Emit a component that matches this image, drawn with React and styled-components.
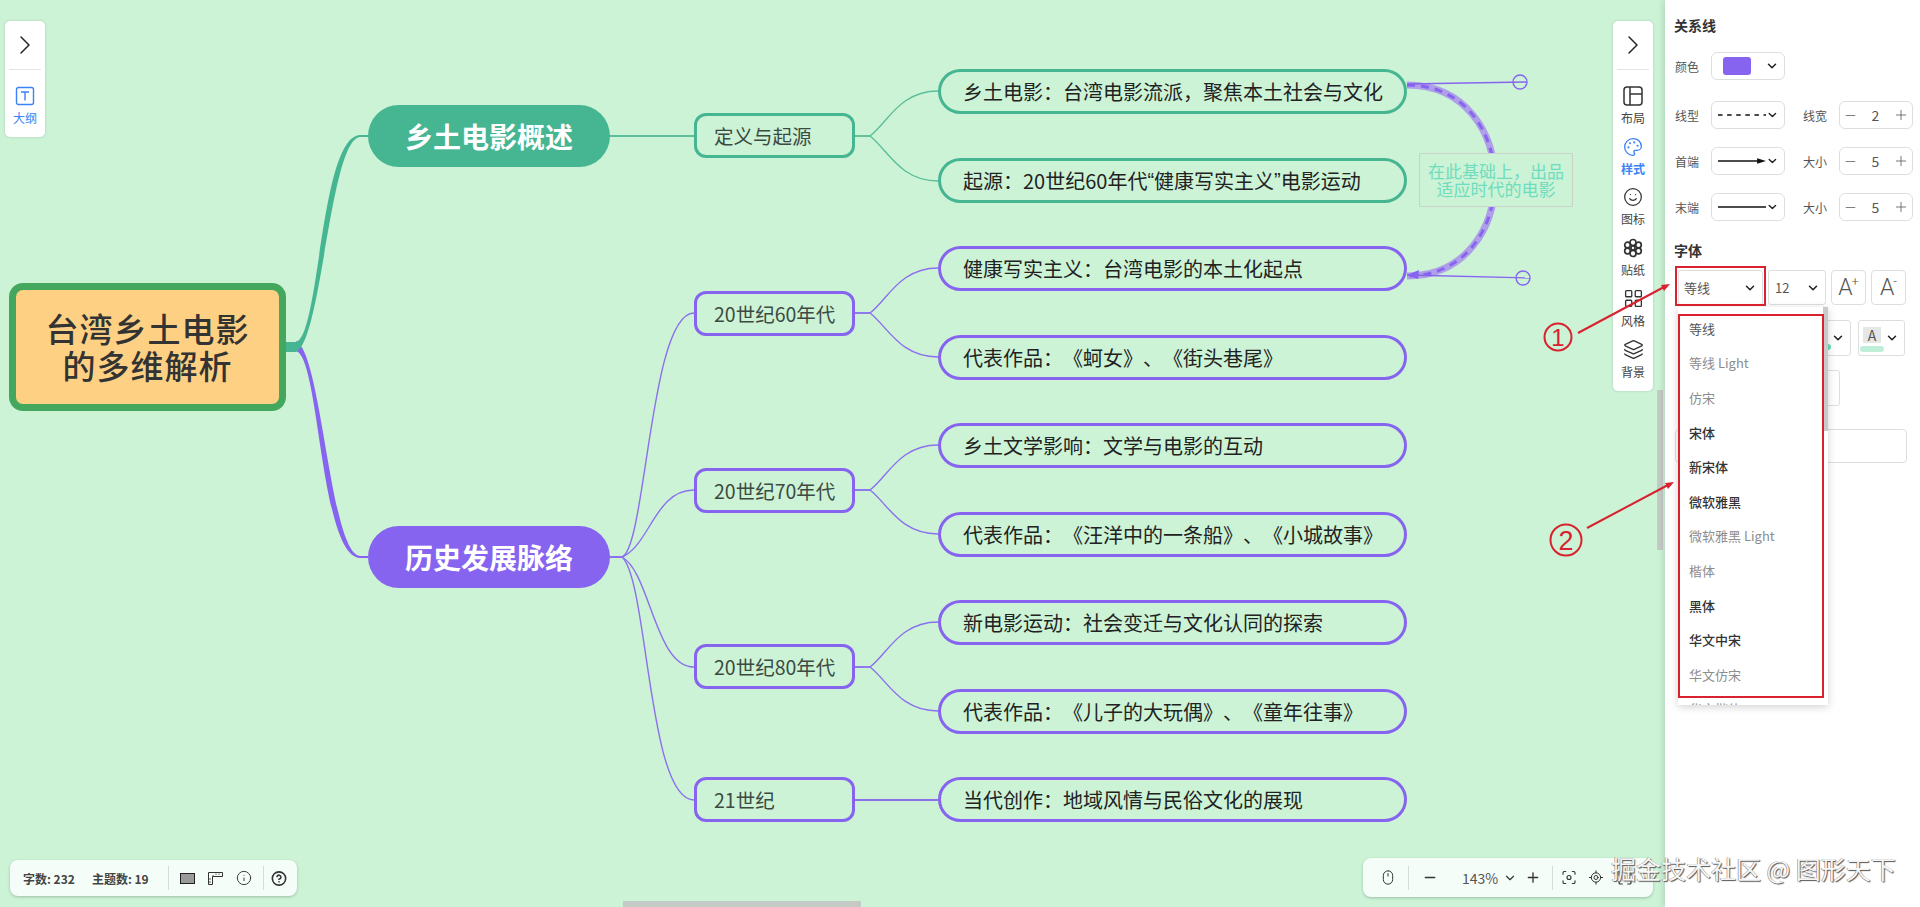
import React from 'react';
import styled, { createGlobalStyle } from 'styled-components';
import { ChevronRight, ChevronDown, Palette, Smile, LayoutGrid, Layers, Info, CircleHelp, Minus, Plus, Mouse, LocateFixed, Focus, Maximize } from 'lucide-react';

const TEAL = '#46B592';
const PURPLE = '#8764F0';
const BLUE = '#3B82F6';
const CJK = '"Noto Sans CJK SC", "Noto Sans", sans-serif';

const GlobalStyle = createGlobalStyle`
    html, body {
        margin: 0;
        padding: 0;
        overflow: hidden;
    }
    body {
        font-family: ${CJK};
        color: #333;
        text-spacing-trim: space-all;
    }
`;

const Page = styled.div`
    position: relative;
    display: flex;
    width: 1920px;
    height: 907px;
    overflow: hidden;
    background: #fff;
`;

const Canvas = styled.main`
    position: relative;
    flex: 1;
    background: #CCF3D6;
`;

const EdgeLayer = styled.svg`
    position: absolute;
    inset: 0;
    width: 100%;
    height: 100%;
`;

const placed = (p) => ({ style: { left: p.$x, top: p.$y, width: p.$w, height: p.$h } });

const RootNode = styled.div.attrs(placed)`
    position: absolute;
    box-sizing: border-box;
    display: flex;
    align-items: center;
    justify-content: center;
    text-align: center;
    background: #FDD083;
    border: 7px solid #43A85E;
    border-radius: 14px;
    font-size: 33px;
    line-height: 37px;
    letter-spacing: 1px;
    font-weight: 500;
    color: #333;
`;

const MainNode = styled.div.attrs(placed)`
    position: absolute;
    display: flex;
    align-items: center;
    justify-content: center;
    background: ${(p) => p.$accent};
    border-radius: 31px;
    font-size: 28px;
    font-weight: 700;
    color: #fff;
`;

const SubNode = styled.div.attrs(placed)`
    position: absolute;
    box-sizing: border-box;
    display: flex;
    align-items: center;
    padding-left: 17px;
    border: 3px solid ${(p) => p.$accent};
    border-radius: 12px;
    font-size: 19.5px;
    color: #3c4a42;
`;

const LeafNode = styled.div.attrs(placed)`
    position: absolute;
    box-sizing: border-box;
    display: flex;
    align-items: center;
    padding-left: 22px;
    border: 3px solid ${(p) => p.$accent};
    border-radius: 23px;
    font-size: 20px;
    color: #222;
    white-space: pre;
`;

const NarrowQuote = styled.span`
    font-family: "Liberation Sans", sans-serif;
`;

const RelationLabel = styled.div`
    position: absolute;
    left: 1419px;
    top: 153px;
    box-sizing: border-box;
    width: 154px;
    height: 54px;
    display: flex;
    align-items: center;
    justify-content: center;
    text-align: center;
    background: #CCF3D6;
    border: 1.5px solid #C9D3C8;
    font-size: 17px;
    line-height: 18px;
    color: #6FDCBE;
`;

const SideBar = styled.div`
    position: absolute;
    top: 21px;
    ${(p) => (p.$right ? 'right: 12px;' : 'left: 5px;')}
    box-sizing: border-box;
    width: 40px;
    height: ${(p) => p.$h}px;
    display: flex;
    flex-direction: column;
    align-items: center;
    background: #fff;
    border-radius: 5px;
    box-shadow: 0 0 3px rgba(0, 0, 0, 0.16);
`;

const Collapse = styled.div`
    width: 32px;
    height: 48px;
    flex: none;
    margin-bottom: 16px;
    display: flex;
    align-items: center;
    justify-content: center;
    border-bottom: 1px solid #e4e4e4;
    color: #222;
`;

const SideItem = styled.div`
    width: 100%;
    height: 50.6px;
    flex: none;
    display: flex;
    flex-direction: column;
    align-items: center;
    gap: 5px;
    color: ${(p) => (p.$active ? BLUE : '#444')};
    font-size: 12px;
    line-height: 14px;
    font-weight: ${(p) => (p.$bold ? 700 : 400)};
    svg { flex: none; }
`;

const BottomBar = styled.div`
    position: absolute;
    display: flex;
    align-items: center;
    box-sizing: border-box;
    height: ${(p) => p.$h}px;
    width: ${(p) => p.$w}px;
    bottom: ${(p) => p.$b}px;
    ${(p) => (p.$right ? 'left: 1363px;' : 'left: 10px;')}
    background: #F5FDF9;
    border-radius: 8px;
    box-shadow: 0 1px 3px rgba(0, 0, 0, 0.22);
    font-size: 12px;
    color: #444;
`;

const Stat = styled.span`
    font-weight: 700;
    margin-left: ${(p) => p.$ml}px;
    white-space: nowrap;
`;

const BarSep = styled.span`
    width: 1px;
    height: 24px;
    background: #d6dcd8;
    flex: none;
    margin-left: ${(p) => p.$ml}px;
`;

const BarIcon = styled.span`
    display: flex;
    width: 16px;
    justify-content: center;
    flex: none;
    margin-left: ${(p) => p.$ml}px;
    color: #333;
`;

const Zoom = styled.span`
    margin-left: ${(p) => p.$ml}px;
    width: 36px;
    font-size: 14px;
    color: #555;
    flex: none;
`;

const ScrollThumb = styled.div`
    position: absolute;
    background: #C4CAC5;
    ${(p) => p.$kind === 'h'
        ? 'left: 623px; bottom: 0; width: 238px; height: 6px;'
        : 'right: 2px; top: 390px; width: 6px; height: 160px;'}
`;

const Panel = styled.aside`
    position: relative;
    flex: none;
    box-sizing: border-box;
    width: 255px;
    padding: 18px 0 0 10px;
    background: #fff;
    box-shadow: -3px 0 5px rgba(0, 0, 0, 0.09);
    font-size: 12px;
    color: #555;
`;

const Title = styled.h3`
    margin: ${(p) => p.$mt || 0}px 0 ${(p) => p.$mb || 0}px -1px;
    font-size: 14px;
    line-height: 14px;
    font-weight: 700;
    color: #333;
`;

const FormRow = styled.div`
    display: flex;
    align-items: center;
    height: 28px;
    margin-top: ${(p) => p.$mt}px;
`;

const Label = styled.span`
    flex: none;
    width: ${(p) => p.$w || 36}px;
    margin-left: ${(p) => p.$ml || 0}px;
    white-space: nowrap;
`;

const Select = styled.div`
    flex: none;
    box-sizing: border-box;
    display: flex;
    align-items: center;
    justify-content: space-between;
    width: ${(p) => p.$w}px;
    height: ${(p) => p.$h || 28}px;
    margin-left: ${(p) => p.$ml || 0}px;
    padding: 0 5px 0 ${(p) => p.$pl ?? 6}px;
    border: 1px solid #dcdfe0;
    border-radius: ${(p) => p.$r || 6}px;
    background: #fff;
    font-size: 13px;
    color: #555;
`;

const Swatch = styled.span`
    width: 28px;
    height: 18px;
    margin-left: 6px;
    border-radius: 3px;
    background: ${PURPLE};
`;

const Stepper = styled.div`
    flex: none;
    box-sizing: border-box;
    display: flex;
    align-items: center;
    justify-content: space-between;
    width: 74px;
    height: 28px;
    padding: 0 3px;
    border: 1px solid #dcdfe0;
    border-radius: 6px;
    font-size: 14px;
    color: #555;
`;

const FontRow = styled.div`
    display: flex;
    gap: ${(p) => p.$gap || 5}px;
    margin: ${(p) => p.$mt}px 0 0 3px;
    height: ${(p) => p.$h}px;
`;

const SizeButton = styled.div`
    flex: none;
    box-sizing: border-box;
    width: 35px;
    display: flex;
    align-items: center;
    justify-content: center;
    border: 1px solid #dcdfe0;
    border-radius: 4px;
    font-family: "Roboto", sans-serif;
    font-size: 23px;
    font-weight: 300;
    color: #555;
    sup {
        font-size: 13px;
        line-height: 1;
        margin: -12px 0 0 -1px;
    }
`;

const ColorA = styled.span`
    position: relative;
    display: block;
    width: 18px;
    height: 16px;
    line-height: 16px;
    margin: 0 0 6px 4px;
    background: #E4E7E6;
    text-align: center;
    font-size: 14px;
    &::after {
        content: '';
        position: absolute;
        left: -3px;
        right: -3px;
        bottom: -9px;
        height: 6px;
        border-radius: 3px;
        background: #BFEFD9;
    }
`;

const Dot = styled.span`
    width: 6px;
    height: 6px;
    margin: 18px 0 0 auto;
    border-radius: 50%;
    background: #6FDCBE;
`;

const WideField = styled.div`
    box-sizing: border-box;
    width: 232px;
    height: 34px;
    margin-top: 23px;
    border: 1px solid #dcdfe0;
    border-radius: 4px;
`;

const Dropdown = styled.div`
    position: absolute;
    left: 13px;
    top: 307px;
    box-sizing: border-box;
    width: 150px;
    height: 398px;
    padding-top: 4px;
    overflow: hidden;
    background: #fff;
    box-shadow: 0 2px 8px rgba(0, 0, 0, 0.18);
`;

const DropThumb = styled.div`
    position: absolute;
    right: 0;
    top: 0;
    width: 5px;
    height: 124px;
    background: #C9C9C9;
`;

const FontItem = styled.div`
    height: 34.6px;
    display: flex;
    align-items: center;
    padding-left: 11px;
    font-size: 13px;
    white-space: nowrap;
    color: ${(p) => (p.$tone === 'thin' ? '#8d8d8d' : p.$tone === 'bold' ? '#333' : '#555')};
    font-weight: ${(p) => (p.$tone === 'bold' ? 500 : 400)};
`;

const AnnotationLayer = styled.svg`
    position: absolute;
    inset: 0;
    width: 1920px;
    height: 907px;
    pointer-events: none;
`;

const Watermark = styled.div`
    position: absolute;
    left: 1611px;
    top: 853px;
    font-size: 25px;
    line-height: 30px;
    white-space: nowrap;
    color: #f6f6f6;
    text-shadow: 1px 1px 1px #555, -0.5px -0.5px 0.5px #777;
`;

const subs = [
    { text: '定义与起源', y: 113, accent: TEAL },
    { text: '20世纪60年代', y: 291, accent: PURPLE },
    { text: '20世纪70年代', y: 468, accent: PURPLE },
    { text: '20世纪80年代', y: 644, accent: PURPLE },
    { text: '21世纪', y: 777, accent: PURPLE },
];

const leaves = [
    { text: '乡土电影：台湾电影流派，聚焦本土社会与文化', y: 69, accent: TEAL },
    { text: <>起源：20世纪60年代<NarrowQuote>“</NarrowQuote>健康写实主义<NarrowQuote>”</NarrowQuote>电影运动</>, y: 158, accent: TEAL },
    { text: '健康写实主义：台湾电影的本土化起点', y: 246, accent: PURPLE },
    { text: '代表作品：《蚵女》、《街头巷尾》', y: 335, accent: PURPLE },
    { text: '乡土文学影响：文学与电影的互动', y: 423, accent: PURPLE },
    { text: '代表作品：《汪洋中的一条船》、《小城故事》', y: 512, accent: PURPLE },
    { text: '新电影运动：社会变迁与文化认同的探索', y: 600, accent: PURPLE },
    { text: '代表作品：《儿子的大玩偶》、《童年往事》', y: 689, accent: PURPLE },
    { text: '当代创作：地域风情与民俗文化的展现', y: 777, accent: PURPLE },
];

// sub node centre -> leaf centres
const forks = [
    { y: 136, to: [91, 181], color: '#5CBF9A' },
    { y: 313, to: [268, 357], color: '#8C70EE' },
    { y: 490, to: [445, 534], color: '#8C70EE' },
    { y: 667, to: [622, 711], color: '#8C70EE' },
];

const fonts = [
    ['等线'],
    ['等线 Light', 'thin'],
    ['仿宋', 'thin'],
    ['宋体', 'bold'],
    ['新宋体', 'bold'],
    ['微软雅黑', 'bold'],
    ['微软雅黑 Light', 'thin'],
    ['楷体', 'thin'],
    ['黑体', 'bold'],
    ['华文中宋', 'bold'],
    ['华文仿宋', 'thin'],
    ['华文楷体', 'thin'],
];

function Edges() {
    return (
        <EdgeLayer>
            <path fill={PURPLE} d="M296 341 C 322 353, 330 553, 360 556 L368 556 L368 558 L360 558 C 320 556, 320 357, 296 351 Z" />
            <path fill={TEAL} d="M286 342 L296 342 C 320 336, 320 137, 360 135 L368 135 L368 137 L360 137 C 330 140, 322 340, 296 352 L286 352 Z" />
            <path stroke="#5CBF9A" strokeWidth="2" fill="none" d="M610 136 H694" />
            <path stroke="#8C70EE" strokeWidth="2" fill="none" d="M855 800 H938" />
            {forks.map((f) => f.to.map((t) => (
                <path key={t} stroke={f.color} strokeWidth="1.4" fill="none"
                    d={`M855 ${f.y} L870 ${f.y} C 888 ${f.y + (t < f.y ? -14 : 14)}, 900 ${t}, 938 ${t}`} />
            )))}
            <g stroke="#8C70EE" strokeWidth="1.4" fill="none">
                <path d="M610 557 L622 557 C 646 548, 650 313, 694 313" />
                <path d="M610 557 L622 557 C 650 545, 655 490, 694 490" />
                <path d="M610 557 L622 557 C 650 572, 655 667, 694 667" />
                <path d="M610 557 L622 557 C 648 580, 648 800, 694 800" />
            </g>
            <path stroke="#AE9FE8" strokeWidth="7" fill="none" d="M1407 85 C 1524 85, 1524 276, 1407 276" />
            <path stroke={PURPLE} strokeWidth="3" strokeDasharray="8 6" fill="none" d="M1407 85 C 1524 85, 1524 276, 1407 276" />
            <g stroke={PURPLE} strokeWidth="1.4" fill="none">
                <path d="M1407 84 L1527 82" />
                <circle cx="1520" cy="82" r="7" />
                <path d="M1407 275 L1530 278" />
                <circle cx="1523" cy="278" r="7" />
            </g>
            <polygon fill={PURPLE} points="1407,275 1419,270 1418,279" />
        </EdgeLayer>
    );
}

const LayoutIcon = () => (
    <svg width="20" height="20" viewBox="0 0 20 20" fill="none" stroke="#333" strokeWidth="1.5">
        <rect x="1" y="1" width="18" height="18" rx="3" />
        <path d="M7 1V19M7 8H19" />
    </svg>
);

const FlowerIcon = () => (
    <svg width="20" height="20" viewBox="0 0 20 20" fill="none" stroke="#333" strokeWidth="1.7">
        <circle cx="10" cy="4.5" r="3" />
        <circle cx="10" cy="15.5" r="3" />
        <circle cx="4.5" cy="7" r="2.8" />
        <circle cx="15.5" cy="7" r="2.8" />
        <circle cx="4.5" cy="13" r="2.8" />
        <circle cx="15.5" cy="13" r="2.8" />
        <circle cx="10" cy="10" r="2" />
    </svg>
);

const OutlineIcon = () => (
    <svg width="20" height="20" viewBox="0 0 20 20" fill="none" stroke={BLUE} strokeWidth="1.4">
        <rect x="1.5" y="1.5" width="17" height="17" rx="2" />
        <path d="M6 6H14M10 6V14.5" />
    </svg>
);

const KeyboardIcon = () => (
    <svg width="15" height="11" viewBox="0 0 15 11" fill="#9a9a9a" stroke="#222" strokeWidth="1">
        <rect x="0.5" y="0.5" width="14" height="10" />
    </svg>
);

const RulerIcon = () => (
    <svg width="15" height="13" viewBox="0 0 15 13" fill="none" stroke="#333" strokeWidth="1">
        <path d="M0.5 0.5H14.5V4.5H4.5V12.5H0.5Z" />
        <path d="M4 4H6M8 1.5V3M11 1.5V3M1 7H3M1 10H3" strokeWidth="0.8" />
    </svg>
);

const LineSample = ({ kind }) => (
    <svg width="53" height="8" viewBox="0 0 53 8">
        <line x1="0" y1="4" x2={kind === 'arrow' ? 46 : 53} y2="4" stroke="#111" strokeWidth="1.9"
            strokeDasharray={kind === 'dash' ? '5 5' : undefined} />
        {kind === 'arrow' && <polygon points="43,1 53,4 43,7" fill="#111" />}
    </svg>
);

const Caret = () => <ChevronDown size={14} strokeWidth={2.6} color="#222" />;

const Step = ({ value }) => (
    <Stepper>
        <Minus size={15} strokeWidth={1.2} />
        {value}
        <Plus size={16} strokeWidth={1.2} />
    </Stepper>
);

export default function App() {
    return (
        <Page>
            <GlobalStyle />
            <Canvas>
                <Edges />
                <RootNode $x={9} $y={283} $w={277} $h={128}>台湾乡土电影<br />的多维解析</RootNode>
                <MainNode $x={368} $y={105} $w={242} $h={62} $accent={TEAL}>乡土电影概述</MainNode>
                <MainNode $x={368} $y={526} $w={242} $h={62} $accent={PURPLE}>历史发展脉络</MainNode>
                {subs.map((s) => (
                    <SubNode key={s.y} $x={694} $y={s.y} $w={161} $h={45} $accent={s.accent}>{s.text}</SubNode>
                ))}
                {leaves.map((l) => (
                    <LeafNode key={l.y} $x={938} $y={l.y} $w={469} $h={45} $accent={l.accent}>{l.text}</LeafNode>
                ))}
                <RelationLabel>在此基础上，出品<br />适应时代的电影</RelationLabel>

                <SideBar $h={116}>
                    <Collapse><ChevronRight size={32} strokeWidth={1.1} /></Collapse>
                    <SideItem $active><OutlineIcon />大纲</SideItem>
                </SideBar>
                <SideBar $right $h={370}>
                    <Collapse><ChevronRight size={32} strokeWidth={1.1} /></Collapse>
                    <SideItem><LayoutIcon />布局</SideItem>
                    <SideItem $active $bold><Palette size={20} strokeWidth={1.6} />样式</SideItem>
                    <SideItem><Smile size={20} strokeWidth={1.5} color="#333" />图标</SideItem>
                    <SideItem><FlowerIcon />贴纸</SideItem>
                    <SideItem><LayoutGrid size={21} strokeWidth={1.5} color="#333" />风格</SideItem>
                    <SideItem><Layers size={21} strokeWidth={1.5} color="#333" />背景</SideItem>
                </SideBar>

                <BottomBar $w={287} $h={36} $b={11}>
                    <Stat $ml={13}>字数: 232</Stat>
                    <Stat $ml={17}>主题数: 19</Stat>
                    <BarSep $ml={19} />
                    <BarIcon $ml={11}><KeyboardIcon /></BarIcon>
                    <BarIcon $ml={12}><RulerIcon /></BarIcon>
                    <BarIcon $ml={12}><Info size={16} strokeWidth={1.4} /></BarIcon>
                    <BarSep $ml={11} />
                    <BarIcon $ml={7}><CircleHelp size={17} strokeWidth={2.4} /></BarIcon>
                </BottomBar>
                <BottomBar $right $w={290} $h={39} $b={10}>
                    <BarIcon $ml={17}><Mouse size={19} strokeWidth={1.5} /></BarIcon>
                    <BarSep $ml={12} />
                    <BarIcon $ml={13}><Minus size={19} strokeWidth={2} /></BarIcon>
                    <Zoom $ml={24}>143%</Zoom>
                    <BarIcon $ml={4}><ChevronDown size={14} strokeWidth={2} /></BarIcon>
                    <BarIcon $ml={7}><Plus size={19} strokeWidth={2} /></BarIcon>
                    <BarSep $ml={11} />
                    <BarIcon $ml={8}><Focus size={17} strokeWidth={1.7} /></BarIcon>
                    <BarIcon $ml={11}><LocateFixed size={17} strokeWidth={1.5} /></BarIcon>
                    <BarIcon $ml={13}><Maximize size={16} strokeWidth={1.8} /></BarIcon>
                </BottomBar>

                <ScrollThumb $kind="h" />
                <ScrollThumb $kind="v" />
            </Canvas>

            <Panel>
                <Title $mb={20}>关系线</Title>
                <FormRow $mt={0}>
                    <Label>颜色</Label>
                    <Select $w={74} $pl={5}><Swatch /><Caret /></Select>
                </FormRow>
                <FormRow $mt={21}>
                    <Label>线型</Label>
                    <Select $w={74}><LineSample kind="dash" /><Caret /></Select>
                    <Label $w={36} $ml={18}>线宽</Label>
                    <Step value={2} />
                </FormRow>
                <FormRow $mt={18}>
                    <Label>首端</Label>
                    <Select $w={74}><LineSample kind="arrow" /><Caret /></Select>
                    <Label $w={36} $ml={18}>大小</Label>
                    <Step value={5} />
                </FormRow>
                <FormRow $mt={18}>
                    <Label>末端</Label>
                    <Select $w={74}><LineSample kind="solid" /><Caret /></Select>
                    <Label $w={36} $ml={18}>大小</Label>
                    <Step value={5} />
                </FormRow>

                <Title $mt={22} $mb={13}>字体</Title>
                <FontRow $mt={0} $h={35}>
                    <Select $w={85} $h={35} $r={3} $pl={5}>等线<Caret /></Select>
                    <Select $w={58} $h={35} $r={3} $pl={6}>12<Caret /></Select>
                    <SizeButton>A<sup>+</sup></SizeButton>
                    <SizeButton>A<sup>-</sup></SizeButton>
                </FontRow>
                <FontRow $mt={15} $h={36} $gap={7}>
                    <Select $w={85} $h={36} $r={3} />
                    <Select $w={81} $h={36} $r={3} $pl={0}><Dot /><Caret /></Select>
                    <Select $w={47} $h={36} $r={3} $pl={0}><ColorA>A</ColorA><Caret /></Select>
                </FontRow>
                <FontRow $mt={14} $h={36}>
                    <Select $w={162} $h={36} $r={3} />
                </FontRow>
                <WideField />

                <Dropdown>
                    {fonts.map(([name, tone]) => (
                        <FontItem key={name} $tone={tone}>{name}</FontItem>
                    ))}
                    <DropThumb />
                </Dropdown>
            </Panel>

            <AnnotationLayer>
                <g stroke="#D8222F" fill="none" strokeWidth="2">
                    <rect x="1676" y="267" width="89" height="38" />
                    <rect x="1679" y="315" width="144" height="382" />
                    <path d="M1578 333 L1664 287" />
                    <path d="M1587 528 L1668 485" />
                    <circle cx="1558" cy="337" r="13.5" />
                    <circle cx="1566" cy="540" r="15.5" />
                </g>
                <polygon fill="#D8222F" points="1670,284 1661,285 1664,291" />
                <polygon fill="#D8222F" points="1674,482 1665,483 1668,489" />
                <text x="1558" y="346" textAnchor="middle" fontFamily="Liberation Sans, sans-serif" fontSize="24" fill="#D8222F">1</text>
                <text x="1566" y="550" textAnchor="middle" fontFamily="Liberation Sans, sans-serif" fontSize="27" fill="#D8222F">2</text>
            </AnnotationLayer>

            <Watermark>掘金技术社区 @ 图形天下</Watermark>
        </Page>
    );
}
